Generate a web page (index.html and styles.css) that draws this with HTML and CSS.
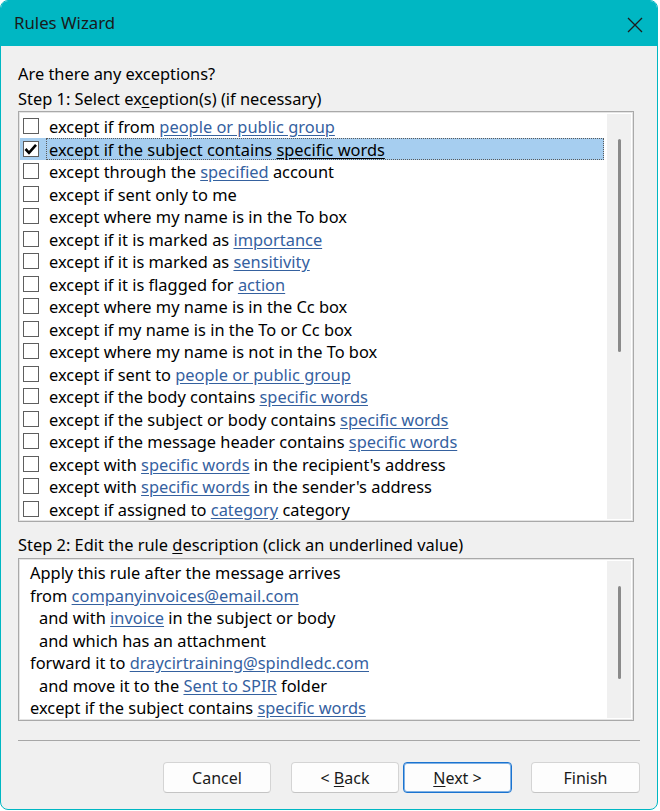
FILE: index.html
```html
<!DOCTYPE html>
<html lang="en">

<head>
    <meta charset="UTF-8" />
    <title>Rules Wizard</title>
    <link rel="stylesheet" href="styles.css">
</head>

<body>

    <div class="window">
        <div class="titlebar">
            <span class="title">Rules Wizard</span>
            <button class="close" aria-label="Close">
                <svg width="16" height="16" viewBox="0 0 16 16">
                    <path d="M1 1 L15 15 M15 1 L1 15" stroke="#1c1c1c" stroke-width="1.3" fill="none" />
                </svg>
            </button>
        </div>

        <div class="content">
            <div class="label">Are there any exceptions?</div>
            <div class="label">Step 1: Select ex<u>c</u>eption(s) (if necessary)</div>

            <div class="listbox">
                <ul class="rows">
                    <li class="row"><span class="box"></span><span class="text">except if from <a>people or public group</a></span></li>
                    <li class="row selected"><span class="box checked">
                            <svg width="14" height="14" viewBox="0 0 14 14">
                                <polyline points="1.5,7 5,10.8 12,2.8" stroke="#000" stroke-width="2.6" fill="none" />
                            </svg>
                        </span><span class="text">except if the subject contains <a>specific words</a></span></li>
                    <li class="row"><span class="box"></span><span class="text">except through the <a>specified</a> account</span></li>
                    <li class="row"><span class="box"></span><span class="text">except if sent only to me</span></li>
                    <li class="row"><span class="box"></span><span class="text">except where my name is in the To box</span></li>
                    <li class="row"><span class="box"></span><span class="text">except if it is marked as <a>importance</a></span></li>
                    <li class="row"><span class="box"></span><span class="text">except if it is marked as <a>sensitivity</a></span></li>
                    <li class="row"><span class="box"></span><span class="text">except if it is flagged for <a>action</a></span></li>
                    <li class="row"><span class="box"></span><span class="text">except where my name is in the Cc box</span></li>
                    <li class="row"><span class="box"></span><span class="text">except if my name is in the To or Cc box</span></li>
                    <li class="row"><span class="box"></span><span class="text">except where my name is not in the To box</span></li>
                    <li class="row"><span class="box"></span><span class="text">except if sent to <a>people or public group</a></span></li>
                    <li class="row"><span class="box"></span><span class="text">except if the body contains <a>specific words</a></span></li>
                    <li class="row"><span class="box"></span><span class="text">except if the subject or body contains <a>specific words</a></span></li>
                    <li class="row"><span class="box"></span><span class="text">except if the message header contains <a>specific words</a></span></li>
                    <li class="row"><span class="box"></span><span class="text">except with <a>specific words</a> in the recipient's address</span></li>
                    <li class="row"><span class="box"></span><span class="text">except with <a>specific words</a> in the sender's address</span></li>
                    <li class="row"><span class="box"></span><span class="text">except if assigned to <a>category</a> category</span></li>
                </ul>
                <div class="scrollbar list-scroll"><div class="thumb"></div></div>
            </div>

            <div class="label step2">Step 2: Edit the rule <u>d</u>escription (click an underlined value)</div>

            <div class="descbox">
                <div class="lines">
                    <div class="line">Apply this rule after the message arrives</div>
                    <div class="line">from <a>companyinvoices@email.com</a></div>
                    <div class="line indent">and with <a>invoice</a> in the subject or body</div>
                    <div class="line indent">and which has an attachment</div>
                    <div class="line">forward it to <a>draycirtraining@spindledc.com</a></div>
                    <div class="line indent">and move it to the <a>Sent to SPIR</a> folder</div>
                    <div class="line">except if the subject contains <a>specific words</a></div>
                </div>
                <div class="scrollbar desc-scroll"><div class="thumb"></div></div>
            </div>

            <div class="separator"></div>

            <div class="buttons">
                <button class="btn">Cancel</button>
                <button class="btn back">&lt; <u>B</u>ack</button>
                <button class="btn next"><u>N</u>ext &gt;</button>
                <button class="btn finish">Finish</button>
            </div>
        </div>
    </div>

</body>

</html>
```

FILE: styles.css
```css
* {
    box-sizing: border-box;
}

body {
    margin: 0;
    background: #ffffff;
    font-family: "Noto Sans", "Open Sans", sans-serif;
    font-size: 16.4px;
    color: #000;
}

.window {
    width: 658px;
    height: 810px;
    border: 1px solid #00b7c3;
    border-radius: 8px;
    background: #f0f0f0;
    overflow: hidden;
    display: flex;
    flex-direction: column;
}

.titlebar {
    height: 45px;
    background: #00b7c3;
    display: flex;
    align-items: center;
    justify-content: space-between;
    padding: 0 14px 0 13px;
    flex-shrink: 0;
}

.title {
    font-size: 16.8px;
    color: #1a1a1a;
    margin-top: -2px;
}

.close {
    background: none;
    border: none;
    padding: 0;
    width: 16px;
    height: 16px;
    display: flex;
    margin-top: 2px;
}

.content {
    padding: 15px 16px 0 17px;
}

.label {
    height: 25px;
    line-height: 25px;
    white-space: nowrap;
}

.label u,
.btn u {
    text-underline-offset: 2px;
}

.listbox,
.descbox {
    width: 616px;
    background: #fff;
    border: 1px solid #a9a9a9;
    box-shadow: inset 0 0 0 1px #e4e4e4;
    display: flex;
}

.listbox {
    height: 411px;
}

.rows {
    list-style: none;
    margin: 0;
    padding: 3px 1px 0 1px;
    flex: 1;
}

.row {
    height: 22.5px;
    display: flex;
    align-items: center;
    white-space: nowrap;
}

.box {
    width: 16px;
    height: 16px;
    border: 1px solid #5e5e5e;
    background: #fff;
    margin-left: 3px;
    margin-right: 7px;
    flex-shrink: 0;
    display: flex;
    align-items: center;
    justify-content: center;
}

.box svg {
    display: block;
}

.text {
    flex: 1;
    height: 22px;
    line-height: 21px;
    padding-left: 2px;
    border: 1px dotted transparent;
}

.row.selected {
    background: #a6cef0;
}

.row.selected .text {
    border-color: #5a5a5a;
}

a {
    color: #35619f;
    text-decoration: underline;
    text-underline-offset: 2px;
}

.row.selected a {
    color: #000;
}

.scrollbar {
    width: 24px;
    margin: 2px;
    background: #f0f0f0;
    display: flex;
    justify-content: center;
    flex-shrink: 0;
}

.thumb {
    width: 3px;
    background: #8a8a8a;
    border-radius: 2px;
}

.list-scroll .thumb {
    margin-top: 25px;
    height: 213px;
}

.desc-scroll .thumb {
    margin-top: 25px;
    height: 93px;
}

.step2 {
    margin-top: 10px;
    height: 26px;
    line-height: 26px;
}

.descbox {
    height: 163px;
}

.lines {
    flex: 1;
    padding: 3px 0 0 11px;
}

.line {
    height: 22.5px;
    line-height: 22.5px;
    white-space: nowrap;
}

.line.indent {
    padding-left: 9px;
}

.separator {
    height: 1px;
    background: #a7a7a7;
    margin-top: 19px;
    width: 622px;
}

.buttons {
    display: flex;
    justify-content: flex-end;
    margin-top: 21px;
    width: 622px;
}

.btn {
    width: 108px;
    height: 31px;
    font-family: inherit;
    font-size: 16px;
    color: #1a1a1a;
    background: #fdfdfd;
    border: 1px solid #d4d4d4;
    border-bottom-color: #c4c4c4;
    border-radius: 4px;
    padding: 0;
}

.back {
    margin-left: 20px;
}

.next {
    margin-left: 4px;
    width: 109px;
    border: 1px solid #1a73d0;
    box-shadow: inset 0 0 0 1px rgba(26, 115, 208, 0.55);
}

.finish {
    margin-left: 19px;
    width: 109px;
}
```
